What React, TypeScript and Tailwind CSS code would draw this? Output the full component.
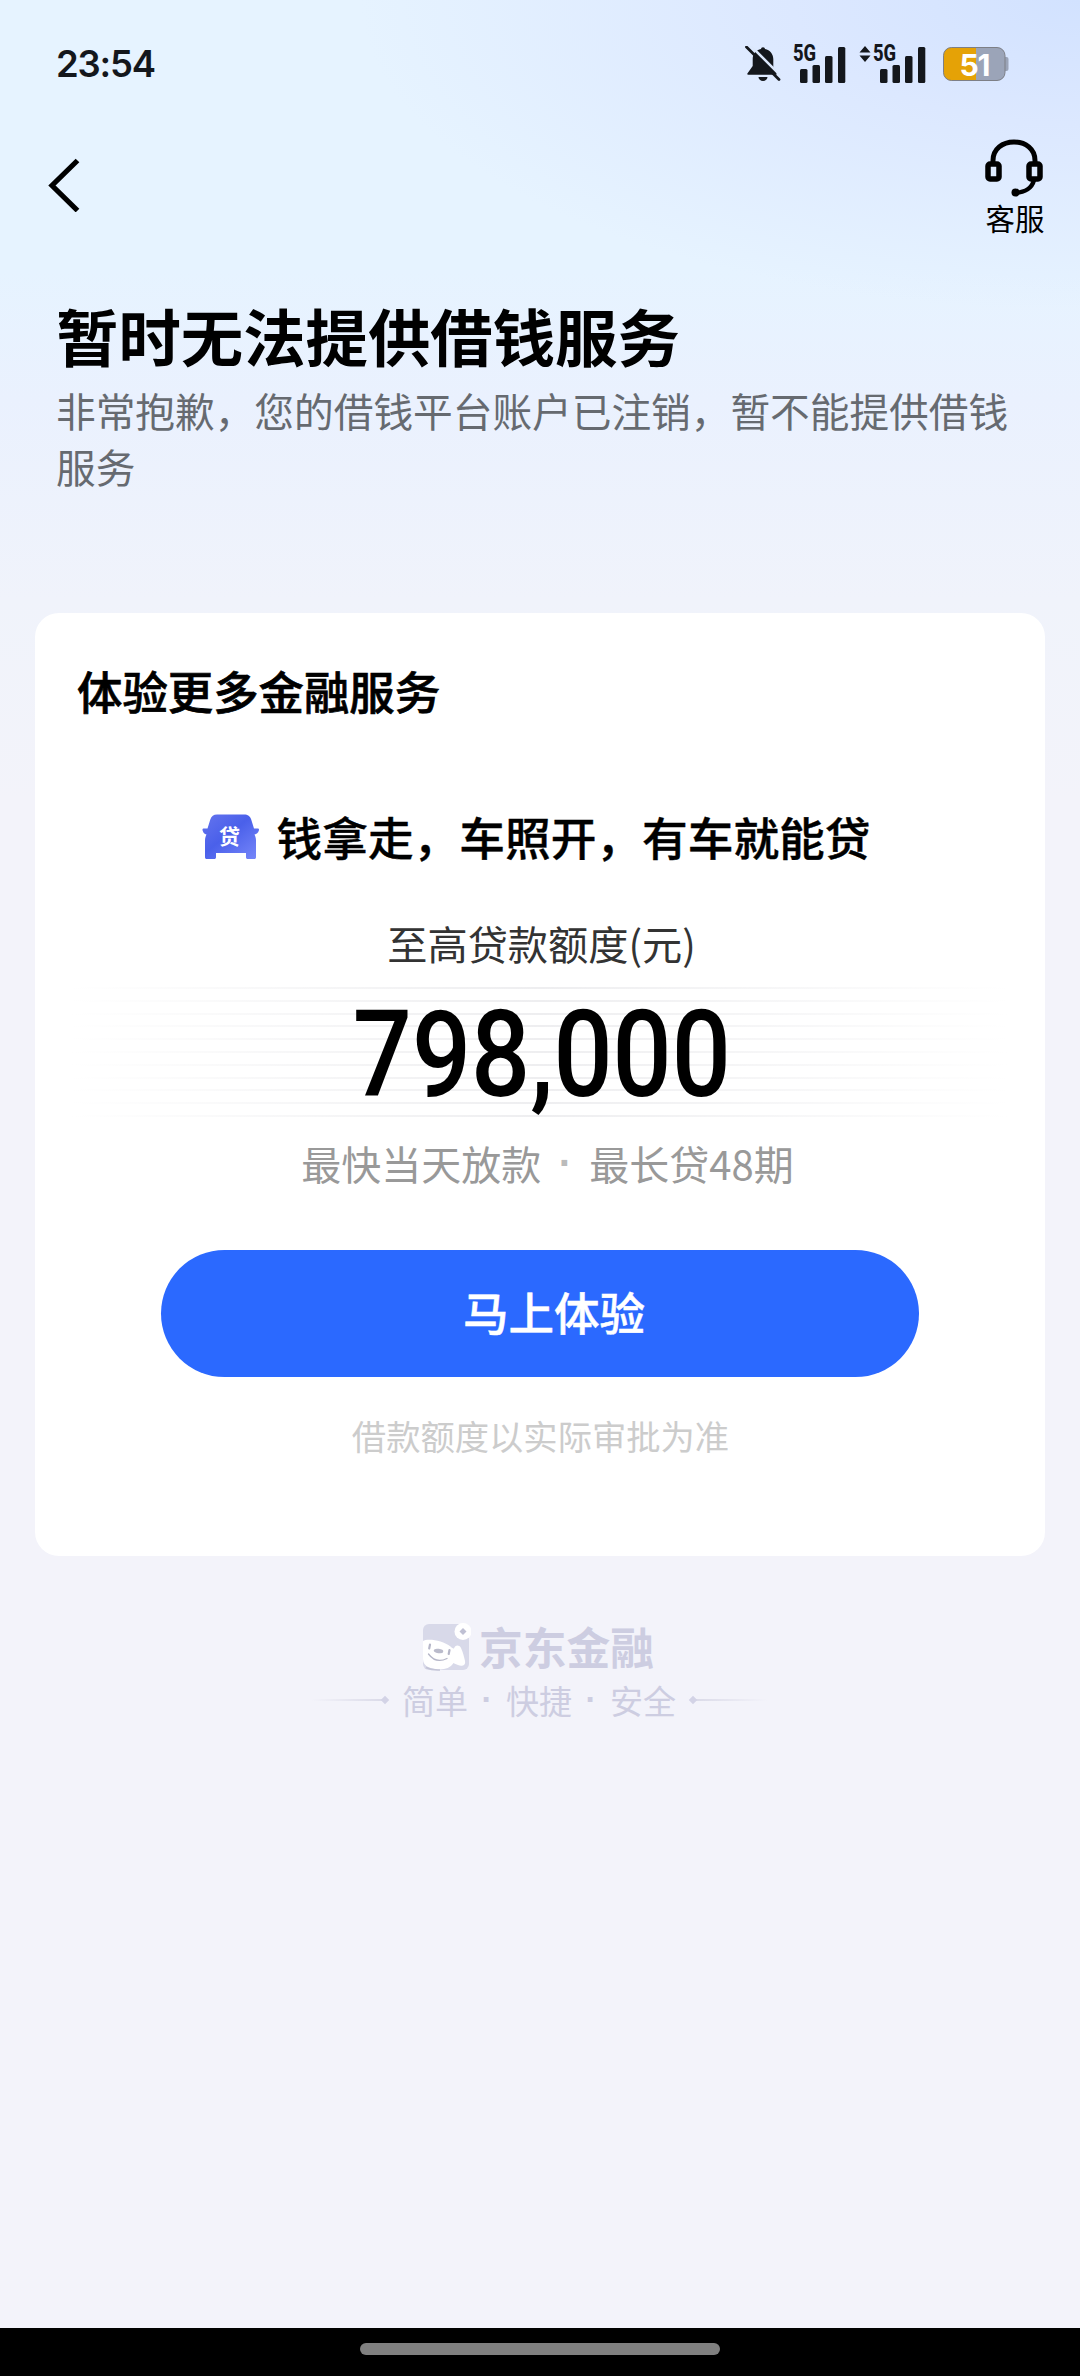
import React from 'react';

const LINE_COUNT = 11;

const BellOffIcon: React.FC = () => (
  <svg width="36" height="36" viewBox="0 0 36 36">
    <path
      d="M18 1.200c1.200 0 2 .8 2 1.900 5 1 8.300 5 8.300 10v7.900l3.300 6.400a1 1 0 0 1-.9 1.400H3.300a1 1 0 0 1-.9-1.400L7.700 20v-7c0-5 3.300-8.900 8.300-9.900 0-1.100.8-1.900 2-1.900z"
      fill="#14171c"
    />
    <path d="M13.500 31h9a4.500 4 0 0 1-9 0z" fill="#14171c" />
    <path d="M3.500-2.500L38 32" stroke="#dce8fc" strokeWidth="2.600" />
    <path d="M1.500 1L34 33.500" stroke="#14171c" strokeWidth="2.800" strokeLinecap="round" />
  </svg>
);

const Signal: React.FC = () => (
  <div className="relative w-[53px] h-[37px]">
    <span className="absolute left-0 top-[-2px] font-['Roboto'] text-[23px] leading-[20px] font-extrabold text-[#14171c] origin-left scale-x-[.8]">
      5G
    </span>
    <svg className="absolute left-0 top-0" width="53" height="37" viewBox="0 0 53 37" fill="#14171c">
      <rect x="7" y="23" width="7.500" height="14" rx="1.500" />
      <rect x="19.500" y="19" width="7.500" height="18" rx="1.500" />
      <rect x="32" y="10" width="7.500" height="27" rx="1.500" />
      <rect x="45" y="1" width="7.300" height="36" rx="1.500" />
    </svg>
  </div>
);

const StatusBar: React.FC = () => (
  <div className="flex items-center justify-between h-[128px] pl-[56px] pr-[71px]">
    <span className="font-['Inter'] text-[36.500px] leading-none font-semibold tracking-[-1.200px] text-[#14171c]">23:54</span>
    <div className="flex items-center">
      <BellOffIcon />
      <div className="ml-[12px]">
        <Signal />
      </div>
      <svg className="ml-[13px] mb-[20px]" width="12" height="16" viewBox="0 0 12 16" fill="#14171c">
        <path d="M6 0l5.500 6.500H.5zM6 16l5.500-6.500H.5z" />
      </svg>
      <div className="ml-[2px]">
        <Signal />
      </div>
      <div className="relative ml-[17px] w-[66px] h-[34px]">
        <svg width="66" height="34" viewBox="0 0 66 34">
          <path d="M62 10h1.500a2 2 0 0 1 2 2v10a2 2 0 0 1-2 2H62z" fill="#9ba4b8" />
          <rect x="0.500" y="0.500" width="61.500" height="33" rx="8" fill="#9ba4b8" />
          <path d="M33 .5V33.500H8.500a8 8 0 0 1-8-8v-17a8 8 0 0 1 8-8z" fill="#e5a206" />
          <rect x="0.500" y="0.500" width="61.500" height="33" rx="8" fill="none" stroke="#7d7f86" />
        </svg>
        <span className="absolute left-0 top-0 w-[63px] text-center font-['Inter'] text-[30px] leading-[36px] font-bold tracking-[-1px] text-white">
          51
        </span>
      </div>
    </div>
  </div>
);

const NavBar: React.FC = () => (
  <div className="flex justify-between h-[168px] pl-[48px] pr-[34px]">
    <svg className="mt-[30px]" width="34" height="54" viewBox="0 0 34 54">
      <path d="M29.500 2.500L4 27.500L29.500 52.500" fill="none" stroke="#000" strokeWidth="5.200" />
    </svg>
    <div className="flex flex-col items-center pt-[10px] w-[64px]">
      <svg width="60" height="60" viewBox="0 0 60 60" fill="none" stroke="#000">
        <path d="M9 24V22.500C9 11 18.500 4 30 4S51 11 51 22.500V24" strokeWidth="5" />
        <rect x="4" y="26" width="11" height="15" rx="2" strokeWidth="5.500" />
        <rect x="45" y="26" width="11" height="15" rx="2" strokeWidth="5.500" />
        <path d="M50 42C48 50 41 54.500 32 54.500" strokeWidth="4.500" />
        <circle cx="31.500" cy="54.500" r="4" fill="#000" stroke="none" />
      </svg>
      <span className="-mt-px pl-[2px] text-[29.500px] leading-[40px] whitespace-nowrap text-black">客服</span>
    </div>
  </div>
);

const CarIcon: React.FC = () => (
  <div className="relative mt-[2px] w-[58px] h-[46px]">
    <svg width="58" height="46" viewBox="0 0 58 46">
      <defs>
        <linearGradient id="car" x1="0" y1="0" x2="1" y2="1">
          <stop offset="0" stopColor="#6474ee" />
          <stop offset=".45" stopColor="#4a60ea" />
          <stop offset="1" stopColor="#7888fa" />
        </linearGradient>
      </defs>
      <path
        d="M15 .5h27c4 0 6 1.500 7.200 5L52 14.500h3.500c1.500 0 1.800 1 1.300 2.200-.8 2.200-2 3.300-4.300 3.800.8 1.500 1.500 3.500 1.500 6V43c0 1.500-.5 2-2 2h-6c-1.500 0-2-.5-2-2v-4H14v4c0 1.500-.5 2-2 2H5c-1.500 0-2-.5-2-2V26.500c0-2.500.7-4.500 1.500-6C2.200 20 1.500 18.900.7 16.700.2 15.500.5 14.500 2 14.500h3.500L8.300 5.500C9.500 2 11.500.5 15 .5z"
        fill="url(#car)"
      />
    </svg>
    <span className="absolute left-0 top-0 w-[56px] text-center text-[21px] leading-[42px] font-bold text-white">贷</span>
  </div>
);

const AmountLines: React.FC = () => (
  <div className="absolute inset-x-[36px] top-[14px] flex flex-col gap-[10.800px]">
    {Array.from({ length: LINE_COUNT }, (_, i) => (
      <div key={i} className="h-[2px] bg-linear-to-r from-transparent via-[#eeeef0] to-transparent" />
    ))}
  </div>
);

const LoanCard: React.FC = () => (
  <div className="mx-[35px] h-[943px] shrink-0 rounded-[24px] bg-white flex flex-col items-center">
    <h2 className="self-start pl-[42px] pt-[47px] text-[45.400px] leading-[60px] font-medium text-black [-webkit-text-stroke:0.7px_black]">
      体验更多金融服务
    </h2>
    <div className="flex items-center mt-[86px] h-[60px] gap-[17px] pr-[8px]">
      <CarIcon />
      <span className="text-[45.700px] leading-[60px] font-medium text-black whitespace-nowrap [-webkit-text-stroke:0.4px_black]">
        钱拿走，车照开，有车就能贷
      </span>
    </div>
    <div className="mt-[47px] pl-[3px] text-[40.200px] leading-[60px] text-[#333]">至高贷款额度(元)</div>
    <div className="relative w-full h-[142px] flex justify-center">
      <AmountLines />
      <span className="relative mt-[11px] ml-[4px] font-['Roboto'] text-[121px] leading-[142px] font-medium text-black scale-x-[.86]">
        798,000
      </span>
    </div>
    <div className="flex mt-[18px] pl-[15px] text-[40px] leading-[60px] text-[#999]">
      <span>最快当天放款</span>
      <span className="w-[48px] text-center font-['Liberation_Sans'] font-bold text-[#bbb]">·</span>
      <span>最长贷48期</span>
    </div>
    <button className="mt-[57px] w-[758px] h-[127px] shrink-0 rounded-full bg-[#2b69ff] pl-[28px] pb-[4px] text-[45.500px] font-medium text-white [-webkit-text-stroke:0.5px_white]">
      马上体验
    </button>
    <div className="mt-[30px] pl-[1px] text-[34.300px] leading-[56px] text-[#ccc]">借款额度以实际审批为准</div>
  </div>
);

const MascotLogo: React.FC = () => (
  <svg width="48" height="48" viewBox="0 0 48 48">
    <rect x="0" y="1" width="46" height="46" rx="6" fill="#d8d9e9" />
    <path
      d="M0 18C4 15 20 17 27.500 23.500C29 25 30 25.500 31 25.500C32 22 36 21.500 38 25C40 29 41 34 42 38C43 43 38 43.500 35 42C32 41 31 40 30.500 40C26 47 16 48 6 44.500Q0 42 0 36z"
      fill="#fff"
    />
    <circle cx="40" cy="8.500" r="8.500" fill="#fff" />
    <path d="M40 5l3.500 3.500-3.500 3.500-3.500-3.500z" fill="#bfc0d3" />
    <ellipse cx="15.500" cy="28" rx="4.800" ry="2.200" fill="#babbcb" transform="rotate(8 15.500 28)" />
    <path d="M7 21.500l-.8 4M26.500 27l-.8 4" stroke="#b5b6c8" strokeWidth="2.200" strokeLinecap="round" />
    <path d="M5.500 31Q13 41 24 35.500" fill="none" stroke="#b5b6c8" strokeWidth="1.300" strokeLinecap="round" />
    <path d="M3 44.500Q9 47.500 17 47" fill="none" stroke="#c3c4d6" strokeWidth="1.500" />
  </svg>
);

const Footer: React.FC = () => (
  <div className="flex flex-col items-center pt-[66px]">
    <div className="flex items-center h-[50px] gap-[8px] pr-[3px]">
      <MascotLogo />
      <span className="text-[43.800px] leading-[48px] font-bold text-[#cdcde1] pb-[2px]">京东金融</span>
    </div>
    <div className="flex items-center mt-[4px] gap-[14px] pr-[2px]">
      <div className="flex items-center">
        <div className="w-[74px] h-[1.500px] bg-linear-to-r from-transparent to-[#dadae8]" />
        <div className="size-[6px] -ml-[3px] rotate-45 bg-[#d3d3e6]" />
      </div>
      <div className="flex items-center text-[33px] leading-[48px] text-[#cdcde1]">
        <span>简单</span>
        <span className="w-[38px] text-center font-['Liberation_Sans'] font-bold">·</span>
        <span>快捷</span>
        <span className="w-[38px] text-center font-['Liberation_Sans'] font-bold">·</span>
        <span>安全</span>
      </div>
      <div className="flex items-center">
        <div className="size-[6px] -mr-[3px] rotate-45 bg-[#d3d3e6]" />
        <div className="w-[74px] h-[1.500px] bg-linear-to-l from-transparent to-[#dadae8]" />
      </div>
    </div>
  </div>
);

const App: React.FC = () => {
  return (
    <div className="w-[1080px] h-[2376px] overflow-hidden flex flex-col bg-[#f3f3fa] font-['Noto_Sans_CJK_SC',sans-serif]">
      <div className="flex-1 bg-[radial-gradient(ellipse_720px_310px_at_100%_0,#d2e2ff,#dce8ff_40%,#e6f3ff00),linear-gradient(#e6f3ff_0,#e6f3ff_270px,#eaf1fe_400px,#f0f3fb_600px,#f3f3fa_800px)]">
        <StatusBar />
        <NavBar />
        <div className="h-[317px] pl-[56px]">
          <h1 className="text-[62.400px] leading-[78px] font-bold text-black">暂时无法提供借钱服务</h1>
          <p className="mt-[8px] w-[980px] text-[39.680px] leading-[56px] text-[#666a70]">
            非常抱歉，您的借钱平台账户已注销，暂不能提供借钱服务
          </p>
        </div>
        <LoanCard />
        <Footer />
      </div>
      <div className="h-[48px] bg-black flex justify-center pt-[15px]">
        <div className="w-[360px] h-[12px] rounded-full bg-[#808080]" />
      </div>
    </div>
  );
};

export default App;
